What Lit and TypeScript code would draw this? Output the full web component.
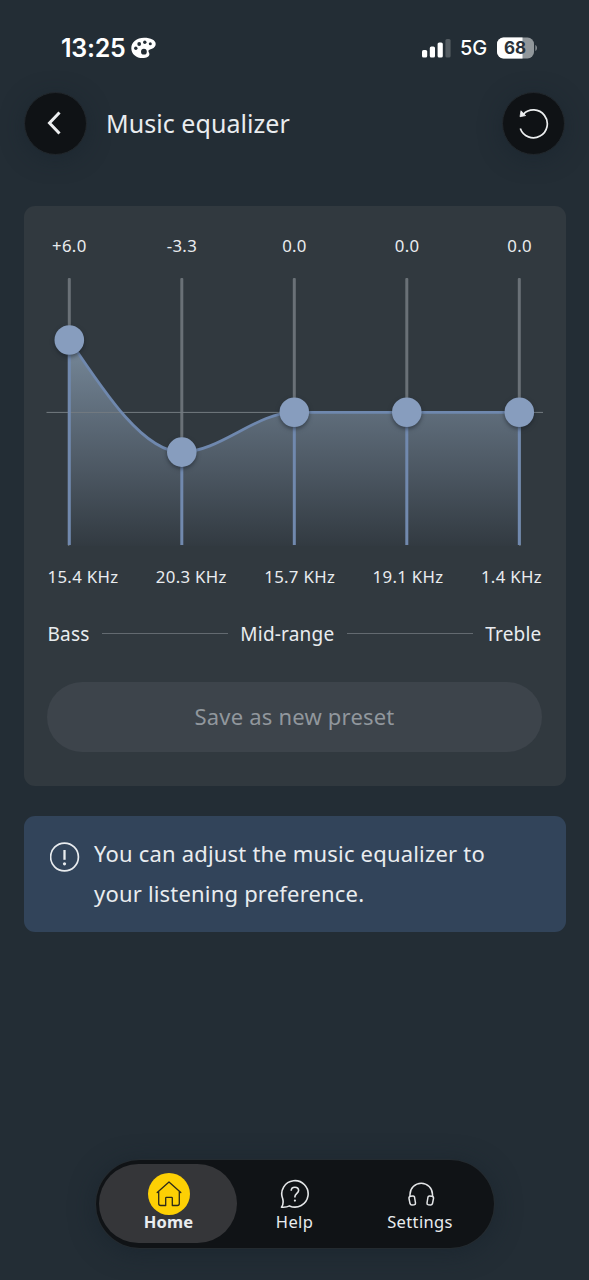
import { LitElement, html, svg, css } from "lit";
import { customElement, state } from "lit/decorators.js";

interface Band {
  gain: number;
  freq: string;
}

const X0 = 22.3;
const STEP = 112.5;
const ZERO_Y = 134.3;
const PX_PER_DB = 12.06;
const BOTTOM = 268;

@customElement("eq-chart")
class EqChart extends LitElement {
  static properties = { bands: { attribute: false } };
  declare bands: Band[];

  static styles = css`
    :host { display: block; height: 268px; }
    svg { display: block; overflow: visible; }
    .track { fill: #6a7177; }
    .level { fill: #7189ae; }
    .axis { stroke: #747b81; stroke-width: 1; }
    .curve { fill: none; stroke: #6f88ae; stroke-width: 2.8; }
    .knob { fill: #879dbe; filter: drop-shadow(0 2px 2px rgba(20, 28, 36, 0.55)); }
  `;

  render() {
    const pts = this.bands.map((b, i) => ({
      x: X0 + STEP * i,
      y: ZERO_Y - b.gain * PX_PER_DB,
    }));
    const secants = pts.slice(1).map((p, i) => (p.y - pts[i].y) / STEP);
    const inner = secants.slice(1).map((s, i) => (s * secants[i] <= 0 ? 0 : (s + secants[i]) / 2));
    const last = secants.length - 1;
    const slopes = [
      (3 * secants[0] - inner[0]) / 2,
      ...inner,
      (3 * secants[last] - inner[inner.length - 1]) / 2,
    ];
    let d = `M${pts[0].x} ${pts[0].y}`;
    for (let i = 1; i < pts.length; i++) {
      const h = STEP / 3;
      const a = pts[i - 1];
      const b = pts[i];
      d += `C${a.x + h} ${a.y + h * slopes[i - 1]} ${b.x - h} ${b.y - h * slopes[i]} ${b.x} ${b.y}`;
    }
    const area = `${d}V${BOTTOM}H${pts[0].x}Z`;
    return html`<svg width="496" height="268" viewBox="0 0 496 268">
      <defs>
        <linearGradient id="fill" x1="0" y1="0" x2="0" y2="1">
          <stop offset="0" stop-color="#77899a"></stop>
          <stop offset="0.35" stop-color="#5f6d7b"></stop>
          <stop offset="0.65" stop-color="#4b5661"></stop>
          <stop offset="1" stop-color="#323a41"></stop>
        </linearGradient>
      </defs>
      ${pts.map((p) => svg`<rect class="track" x=${p.x - 1.5} y="0" width="3" height="268" rx="1"/>`)}
      <path d=${area} fill="url(#fill)"></path>
      <path class="axis" d="M-0.5 134.4H496"></path>
      ${pts.map((p) => svg`<rect class="level" x=${p.x - 1.5} y=${p.y} width="3" height=${BOTTOM - p.y - 1}/>`)}
      <path class="curve" d=${d}></path>
      ${pts.map((p) => svg`<circle class="knob" cx=${p.x} cy=${p.y} r="14.8"/>`)}
    </svg>`;
  }
}

@customElement("app-root")
class AppRoot extends LitElement {
  @state() private bands: Band[] = [
    { gain: 6, freq: "15.4 KHz" },
    { gain: -3.3, freq: "20.3 KHz" },
    { gain: 0, freq: "15.7 KHz" },
    { gain: 0, freq: "19.1 KHz" },
    { gain: 0, freq: "1.4 KHz" },
  ];

  static styles = css`
    :host {
      display: flex;
      flex-direction: column;
      box-sizing: border-box;
      height: 1280px;
      background: #232d35;
      color: #e9ecef;
      font-family: "Noto Sans", sans-serif;
      white-space: nowrap;
    }
    svg { display: block; }
    .status {
      display: flex;
      align-items: center;
      height: 92px;
      padding: 4px 51px 0 61px;
      box-sizing: border-box;
      font-family: Inter, sans-serif;
      color: #fff;
    }
    .time { font-size: 25px; font-weight: 600; letter-spacing: -0.25px; width: 70px; }
    .signal { margin-left: auto; }
    .net { font-size: 20px; font-weight: 500; margin: 0 10px 0 9px; width: 27px; letter-spacing: 0; }
    header {
      display: flex;
      align-items: center;
      height: 62px;
      padding: 0 24px;
    }
    .round {
      display: grid;
      place-items: center;
      width: 63px;
      height: 63px;
      padding: 0;
      border: 1px solid #21272c;
      border-radius: 50%;
      box-sizing: border-box;
      background: #0f1215;
      box-shadow: 0 4px 22px rgba(22, 34, 43, 0.5);
    }
    h1 { flex: 1; margin: -1px 0 0 19px; font-size: 25px; font-weight: 400; line-height: 34px; letter-spacing: 0.05px; }
    .card {
      margin: 52px 23.5px 0;
      height: 580px;
      padding: 26px 23.5px 0;
      box-sizing: border-box;
      border-radius: 11px;
      background: #31393f;
    }
    .gains { display: flex; justify-content: space-between; margin: 0 -15px 0 -15px; }
    .gain { width: 74.6px; text-align: center; font-size: 16.8px; line-height: 28px; letter-spacing: 0.3px; }
    eq-chart { margin-top: 18px; }
    .freqs { display: flex; justify-content: space-between; padding: 0 0 0 0.5px; margin-top: 17px; font-size: 16.8px; line-height: 28px; letter-spacing: 0.32px; }
    .ranges { display: flex; align-items: center; gap: 12.5px; padding: 0 0.5px 0 0.5px; margin-top: 27.5px; font-size: 19px; line-height: 30px; letter-spacing: 0.2px; }
    .rule { flex: 1; height: 1.5px; background: #636a70; }
    .save {
      display: block;
      width: 495px;
      height: 70px;
      margin-top: 33.5px;
      padding: 0 0 2px;
      border: 0;
      border-radius: 35px;
      background: #3d444b;
      color: #91979d;
      font: 400 22px "Noto Sans", sans-serif;
      letter-spacing: 0.2px;
    }
    .info {
      display: flex;
      gap: 14px;
      margin: 30px 23.5px 0;
      height: 116px;
      padding: 17px 26.5px 0;
      box-sizing: border-box;
      border-radius: 11px;
      background: #32445a;
      font-size: 22px;
      line-height: 40.3px;
      letter-spacing: 0.19px;
    }
    .info svg { margin-top: 9px; }
    nav {
      display: flex;
      width: 398px;
      height: 88px;
      margin: auto auto 32px 96px;
      padding: 4px 5px 4px 3px;
      box-sizing: border-box;
      border-radius: 44px;
      background: #101316;
      box-shadow: 0 0 0 1px #242b30, 0 4px 26px rgba(22, 34, 43, 0.6);
    }
    .tab {
      display: flex;
      flex-direction: column;
      align-items: center;
      width: 126px;
      padding-top: 9px;
      box-sizing: border-box;
      font-size: 16.5px;
      line-height: 22px;
      letter-spacing: 0.35px;
    }
    .tab.active { width: 138px; margin-right: -5.500px; padding-left: 1px; border-radius: 40px; background: #353639; font-weight: 700; height: 79px; letter-spacing: 0.2px; }
    .tab.settings { margin-left: -0.5px; }
    .pic { display: grid; place-items: center; width: 42px; height: 42px; border-radius: 50%; margin-bottom: -4px; }
    .settings .pic { padding-left: 2px; }
    .active .pic { background: #fdd004; }
  `;

  private label(g: number) {
    return (g > 0 ? "+" : "") + g.toFixed(1);
  }

  render() {
    return html`
      <div class="status">
        <span class="time">13:25</span>
        <svg width="25" height="22" viewBox="0 0 25 22">
          <path fill="#fff" d="M13 .8C5.800.8.3 5.300.3 11.200c0 5.800 5 9.900 11.200 9.900 4.100 0 6.900-1.600 6.900-3.800 0-1.500-1-2.100-1-3.200 0-1.300 1.600-1.600 3.600-2.400 2.300-.9 3.700-2.500 3.700-4.700C24.700 3.200 19.800.8 13 .8z"/>
          <g fill="#232d35"><circle cx="4.800" cy="11.200" r="1.700"/><circle cx="8.200" cy="7" r="1.900"/><circle cx="13.800" cy="5.300" r="1.700"/><circle cx="19.300" cy="6.800" r="1.500"/><circle cx="12.900" cy="14.700" r="2.900"/></g>
        </svg>
        <svg class="signal" width="29" height="19" viewBox="0 0 29 19">
          <g fill="#fff"><rect x="0" y="11" width="5.200" height="7.500" rx="1.600"/><rect x="7.800" y="7.500" width="5.200" height="11" rx="1.600"/><rect x="15.600" y="3.500" width="5.200" height="15" rx="1.600"/></g>
          <rect x="23.400" y="0" width="5.200" height="18.500" rx="1.600" fill="#535b61"/>
        </svg>
        <span class="net">5G</span>
        <svg width="41" height="22" viewBox="0 0 41 22">
          <defs><clipPath id="b"><rect x="0" y=".5" width="37" height="21" rx="6.500"/></clipPath></defs>
          <g clip-path="url(#b)"><rect width="37" height="22" fill="#91979b"/><rect width="25.500" height="22" fill="#fff"/></g>
          <path d="M38.300 8c1.200.5 1.700 1.700 1.700 3s-.5 2.500-1.700 3z" fill="#858b90"/>
          <text x="18" y="17.300" text-anchor="middle" font-family="Inter, sans-serif" font-size="17" font-weight="700" fill="#29323a">68</text>
        </svg>
      </div>

      <header>
        <button class="round" aria-label="Back">
          <svg width="24" height="28" viewBox="0 0 24 28"><path d="M15.500 3.500L5.500 14L15.500 24.500" fill="none" stroke="#eceeef" stroke-width="3"/></svg>
        </button>
        <h1>Music equalizer</h1>
        <button class="round" aria-label="Reset">
          <svg width="34" height="34" viewBox="0 0 34 34">
            <path d="M6.300 8.300A13.900 13.900 0 1 1 3.300 22.500" fill="none" stroke="#eceeef" stroke-width="1.700"/>
            <path d="M4 4.800L3 10.700L8.600 9.600Z" fill="#eceeef" stroke="#eceeef" stroke-width=".8"/>
          </svg>
        </button>
      </header>

      <section class="card">
        <div class="gains">${this.bands.map((b) => html`<span class="gain">${this.label(b.gain)}</span>`)}</div>
        <eq-chart .bands=${this.bands}></eq-chart>
        <div class="freqs">${this.bands.map((b) => html`<span>${b.freq}</span>`)}</div>
        <div class="ranges">
          <span>Bass</span><i class="rule"></i><span>Mid-range</span><i class="rule"></i><span>Treble</span>
        </div>
        <button class="save">Save as new preset</button>
      </section>

      <section class="info">
        <svg width="30" height="30" viewBox="0 0 30 30">
          <circle cx="14.500" cy="15" r="13.900" fill="none" stroke="#e9ecef" stroke-width="1.700"/>
          <path d="M14.500 8V17.800" stroke="#e9ecef" stroke-width="2.300"/><circle cx="14.500" cy="21.800" r="1.600" fill="#e9ecef"/>
        </svg>
        <div>You can adjust the music equalizer to<br>your listening preference.</div>
      </section>

      <nav>
        <div class="tab active">
          <span class="pic"><svg width="26" height="28" viewBox="0 0 26 28">
            <path d="M1.200 12.600L13 2L24.800 12.600M2.700 11.400V23.500Q2.700 25.500 4.700 25.500H9.700V18Q9.700 17.300 10.400 17.300H15.600Q16.300 17.300 16.300 18V25.500H21.300Q23.300 25.500 23.300 23.500V11.400" fill="none" stroke="#2c2a1a" stroke-width="1.300" stroke-linejoin="round" stroke-linecap="round"/>
          </svg></span>
          <span>Home</span>
        </div>
        <div class="tab">
          <span class="pic"><svg width="30" height="30" viewBox="0 0 30 30">
            <path d="M2.700 19.800A13.200 13.200 0 1 1 9.500 26.900C7 28.200 4.500 28.500 1.500 28.200C3 26 3.700 23.500 2.700 19.800Z" fill="none" stroke="#e4e6e8" stroke-width="1.600" stroke-linejoin="round"/>
            <path d="M11.200 11.800C11.200 9.500 12.700 8.200 14.900 8.200S18.600 9.600 18.600 11.500C18.600 14.300 14.900 14.500 14.900 17.800V18.500" fill="none" stroke="#e4e6e8" stroke-width="1.600"/>
            <circle cx="14.900" cy="21.600" r="1.100" fill="#e4e6e8"/>
          </svg></span>
          <span>Help</span>
        </div>
        <div class="tab settings">
          <span class="pic"><svg width="28" height="26" viewBox="0 0 28 26">
            <g fill="none" stroke="#e4e6e8" stroke-width="1.500" stroke-linejoin="round">
              <path d="M3 15.500V13.500A11 11 0 0 1 25.500 13.500V15.500"/>
              <path d="M3.600 15.200L6 14.900Q7.200 14.800 7.500 16L8.500 22Q8.700 23.600 7.200 23.800L4.800 24Q3.500 24 3.100 22.800L2 17.500Q1.700 15.500 3.600 15.200Z"/>
              <path d="M24.900 15.200L22.500 14.900Q21.300 14.800 21 16L20 22Q19.800 23.600 21.300 23.800L23.700 24Q25 24 25.400 22.800L26.500 17.500Q26.800 15.500 24.900 15.200Z"/>
            </g>
          </svg></span>
          <span>Settings</span>
        </div>
      </nav>
    `;
  }
}
